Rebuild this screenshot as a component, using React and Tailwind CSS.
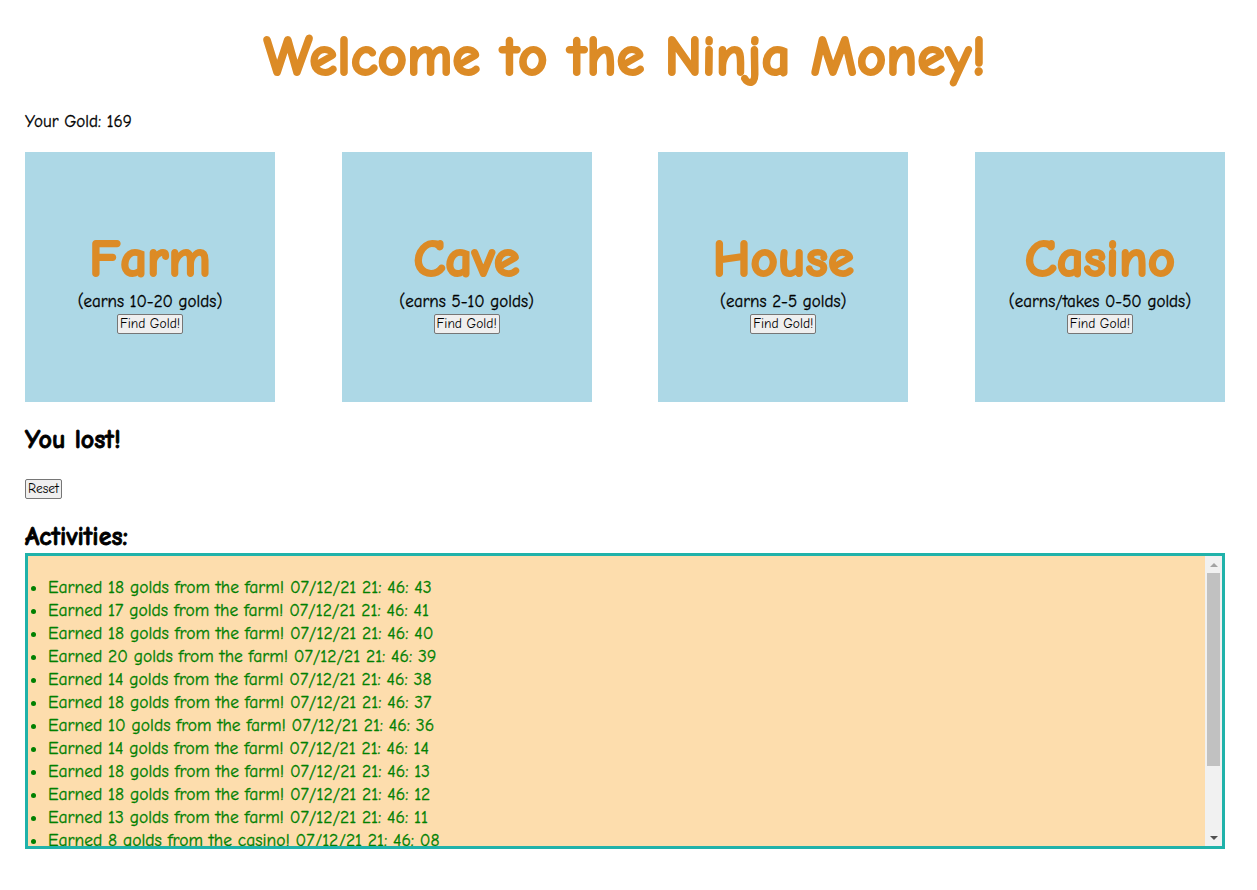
const BUILDINGS = [
  { name: "Farm", note: "(earns 10-20 golds)" },
  { name: "Cave", note: "(earns 5-10 golds)" },
  { name: "House", note: "(earns 2-5 golds)" },
  { name: "Casino", note: "(earns/takes 0-50 golds)" },
];

const ACTIVITIES = [
  "Earned 18 golds from the farm! 07/12/21 21: 46: 43",
  "Earned 17 golds from the farm! 07/12/21 21: 46: 41",
  "Earned 18 golds from the farm! 07/12/21 21: 46: 40",
  "Earned 20 golds from the farm! 07/12/21 21: 46: 39",
  "Earned 14 golds from the farm! 07/12/21 21: 46: 38",
  "Earned 18 golds from the farm! 07/12/21 21: 46: 37",
  "Earned 10 golds from the farm! 07/12/21 21: 46: 36",
  "Earned 14 golds from the farm! 07/12/21 21: 46: 14",
  "Earned 18 golds from the farm! 07/12/21 21: 46: 13",
  "Earned 18 golds from the farm! 07/12/21 21: 46: 12",
  "Earned 13 golds from the farm! 07/12/21 21: 46: 11",
  "Earned 8 golds from the casino! 07/12/21 21: 46: 08",
];

const font = "font-['Comic_Sans_MS','Comic_Neue','DejaVu_Sans',sans-serif]";

function FindButton({ children }) {
  return (
    <button
      type="button"
      className="h-[20px] rounded-[2px] border border-[#767676] bg-[#efefef] px-[2px] text-[13.5px] leading-[17px] text-black"
    >
      {children}
    </button>
  );
}

function Scrollbar() {
  return (
    <div className="flex w-[17px] shrink-0 flex-col bg-[#f1f1f1]">
      <div className="flex h-[17px] items-center justify-center">
        <div className="h-0 w-0 border-x-[4px] border-b-[4px] border-x-transparent border-b-[#a3a3a3]" />
      </div>
      <div className="flex-1 px-[2px]">
        <div className="h-[193px] bg-[#c1c1c1]" />
      </div>
      <div className="flex h-[17px] items-center justify-center">
        <div className="h-0 w-0 border-x-[4px] border-t-[4px] border-x-transparent border-t-[#505050]" />
      </div>
    </div>
  );
}

export default function App() {
  return (
    <main className={`min-h-screen bg-white px-[25px] text-black ${font}`}>
      <div className="w-[1200px]">
        <h1 className="pt-[25px] text-center text-[57px] font-bold leading-[64px] text-[#dc8b26] [-webkit-text-stroke:2px_#dc8b26]">
          Welcome to the Ninja Money!
        </h1>

        <p className="mt-[23px] text-[17px] leading-[20px] [-webkit-text-stroke:0.3px_#000]">Your Gold: 169</p>

        <div className="mt-[20px] flex justify-between">
          {BUILDINGS.map((b) => (
            <div
              key={b.name}
              className="flex h-[250px] w-[250px] flex-col items-center justify-center bg-[#add8e6] pt-[8px]"
            >
              <h2 className="text-[53px] font-bold leading-[60px] text-[#dc8b26] [-webkit-text-stroke:2px_#dc8b26]">
                {b.name}
              </h2>
              <p className="text-[17px] leading-[25px] [-webkit-text-stroke:0.3px_#000]">{b.note}</p>
              <FindButton>Find Gold!</FindButton>
            </div>
          ))}
        </div>

        <h3 className="mt-[23px] text-[26px] font-bold leading-[30px] [-webkit-text-stroke:0.8px_#000]">You lost!</h3>
        <div className="mt-[21px]">
          <FindButton>Reset</FindButton>
        </div>

        <h3 className="mt-[22px] text-[26px] font-bold leading-[31px] [-webkit-text-stroke:0.8px_#000]">Activities:</h3>
        <div className="flex h-[296px] border-[3px] border-[#20b2aa] bg-[#fdddad]">
          <div className="flex-1 overflow-hidden">
            <ul className="mt-[20px] list-disc pl-[20px] text-[17.5px] leading-[23px] text-[#008000] [-webkit-text-stroke:0.3px_#008000]">
              {ACTIVITIES.map((a) => (
                <li key={a}>{a}</li>
              ))}
            </ul>
          </div>
          <Scrollbar />
        </div>
      </div>
    </main>
  );
}
